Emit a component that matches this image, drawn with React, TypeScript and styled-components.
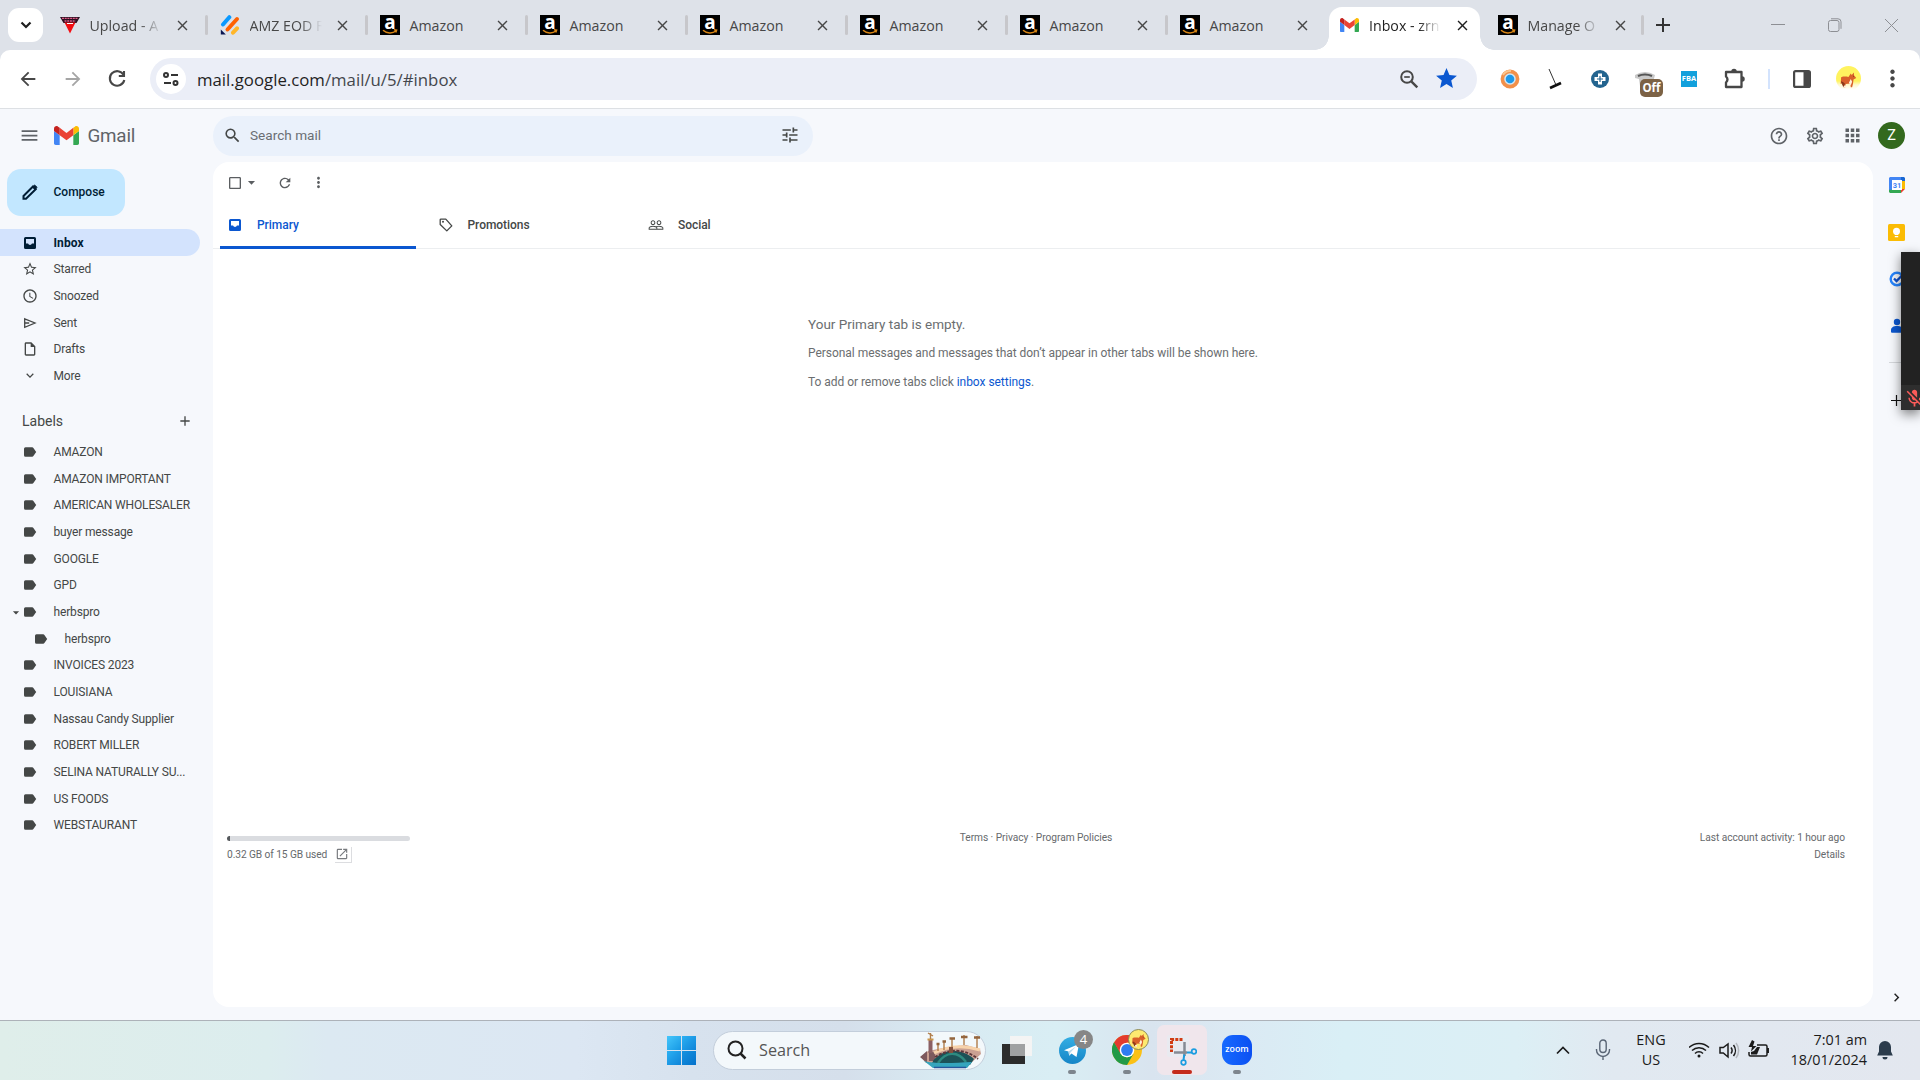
import React from "react";
import styled, { createGlobalStyle } from "styled-components";
import {
  MdMenu, MdSearch, MdTune, MdHelpOutline, MdOutlineSettings, MdApps, MdStarBorder,
  MdAccessTime, MdOutlineInsertDriveFile, MdExpandMore, MdAdd, MdPeopleOutline,
  MdCheckBoxOutlineBlank, MdArrowDropDown, MdRefresh, MdMoreVert, MdOpenInNew, MdClose,
  MdArrowBack, MdArrowForward, MdStar, MdMicOff, MdChevronRight,
} from "react-icons/md";

const ui = `"Open Sans", "Noto Sans", sans-serif`;
const mail = `Roboto, "Liberation Sans", sans-serif`;

const Global = createGlobalStyle`
  * { box-sizing: border-box; }
  body { margin: 0; overflow: hidden; background: #f6f8fc; }
  svg { display: block; flex: none; }
`;

const Screen = styled.div`
  width: 1920px;
  height: 1080px;
  display: flex;
  flex-direction: column;
  font-family: ${ui};
  white-space: nowrap;
`;

/* ---------- tab strip ---------- */

const TabStrip = styled.header`
  height: 50px;
  flex: none;
  display: flex;
  background: #dee2e9;
`;

const TabSearch = styled.button`
  width: 35px;
  height: 34px;
  margin: 8px 3px 0 8px;
  padding: 0;
  border: 0;
  border-radius: 11px;
  background: #fff;
  display: grid;
  place-items: center;
`;

const TabItem = styled.div<{ $active?: boolean; $divider?: boolean; $width: number }>`
  position: relative;
  width: ${(p) => p.$width}px;
  height: 50px;
  display: flex;
  align-items: center;
  padding-left: ${(p) => (p.$active ? 13.5 : 14)}px;
  color: ${(p) => (p.$active ? "#1f1f1f" : "#474747")};
  &::before {
    content: "";
    display: ${(p) => (p.$active ? "block" : "none")};
    position: absolute;
    left: 3px;
    top: 7px;
    width: 151px;
    height: 43px;
    border-radius: 13px 13px 0 0;
    background: #fff;
  }
  &::after {
    content: "";
    position: absolute;
    ${(p) =>
      p.$active
        ? `left: -11px; bottom: 0; width: 179px; height: 14px;
           background:
             radial-gradient(circle at 0 0, transparent 13.5px, #fff 14px) 0 0 / 14px 14px no-repeat,
             radial-gradient(circle at 100% 0, transparent 13.5px, #fff 14px) 100% 0 / 14px 14px no-repeat;`
        : `display: ${p.$divider ? "block" : "none"}; right: -2px; top: 15px; width: 3px; height: 20px;
           border-radius: 2px; background: #c7c7cb;`}
  }
  > * { position: relative; z-index: 1; }
`;

const Favicon = styled.span`
  width: 20px;
  height: 20px;
  flex: none;
  display: grid;
  place-items: center;
`;

const AmazonMark = styled.span`
  width: 20px;
  height: 20px;
  display: flex;
  flex-direction: column;
  align-items: center;
  background: #000;
  color: #fff;
  font: 700 19px/14px ${ui};
`;

const TabTitle = styled.span<{ $fade?: boolean }>`
  width: 75px;
  margin: 2px 0 0 9.5px;
  font-size: 14.2px;
  line-height: 20px;
  mask-image: ${(p) => (p.$fade ? "linear-gradient(90deg, #000 66%, transparent 96%)" : "none")};
`;

const TabClose = styled(MdClose)`
  margin-left: 9.5px;
  width: 17px;
  height: 17px;
`;

const NewTab = styled.div`
  width: 42px;
  display: grid;
  place-items: center;
  color: #333;
`;

const WindowControls = styled.div`
  margin-left: auto;
  display: flex;
  align-items: center;
  gap: 42px;
  padding-right: 21.5px;
  color: #8d8f94;
`;

/* ---------- browser toolbar ---------- */

const ToolbarFrame = styled.div`
  height: 59px;
  flex: none;
  background: #dee2e9;
`;

const BrowserBar = styled.div`
  height: 59px;
  display: flex;
  align-items: center;
  padding: 0 0 1px 17px;
  border-radius: 10px 10px 0 0;
  border-bottom: 1px solid #dde0e4;
  background: #fff;
  color: #474747;
`;

const NavButtons = styled.div`
  flex: none;
  display: flex;
  gap: 22.5px;
  width: 133px;
  > :nth-child(2) { color: #a5a5a5; }
`;

const Omnibox = styled.div`
  width: 1327px;
  flex: none;
  height: 42px;
  border-radius: 21px;
  display: flex;
  align-items: center;
  padding: 0 18px 0 6px;
  background: #ebeef7;
`;

const SiteInfo = styled.span`
  width: 30px;
  height: 30px;
  border-radius: 50%;
  display: grid;
  place-items: center;
  background: #fff;
`;

const Url = styled.span`
  margin: 3px auto 0 11px;
  font-size: 16.8px;
  line-height: 24px;
  color: #44474c;
  b { font-weight: 400; color: #1f1f1f; }
`;

const StarIcon = styled(MdStar)`
  margin-left: 15px;
  color: #0b57d0;
`;

const Extensions = styled.div`
  flex: 1;
  display: flex;
  align-items: center;
  padding-left: 10px;
`;

const ExtSlot = styled.span<{ $w: number }>`
  position: relative;
  width: ${(p) => p.$w}px;
  flex: none;
  display: grid;
  place-items: center;
`;

const OffBadge = styled.span`
  position: absolute;
  left: 18px;
  top: 9px;
  width: 23px;
  height: 18px;
  border-radius: 5px;
  background: #7c6245;
  color: #fff;
  font: 700 11.5px/18px ${ui};
  text-align: center;
`;

const FbaMark = styled.span`
  width: 16px;
  height: 16px;
  background: #12a0dc;
  color: #fff;
  font: 700 7.5px/14px ${ui};
  text-align: center;
`;

const BarDivider = styled.span`
  width: 2px;
  height: 20px;
  background: #d3e3fd;
`;

/* ---------- gmail ---------- */

const Gmail = styled.div`
  flex: 1;
  min-height: 0;
  display: grid;
  grid-template: 53px 1fr / 213px 1fr 47px;
  background: #f6f8fc;
  font-family: ${mail};
  color: #444746;
`;

const Brand = styled.div`
  display: flex;
  align-items: center;
  padding-left: 19px;
  color: #5f6368;
`;

const BrandLogo = styled.span`
  margin-left: 13.5px;
`;

const BrandName = styled.span`
  margin-left: 9px;
  font-size: 18.8px;
  letter-spacing: -0.2px;
`;

const HeaderRow = styled.div`
  grid-column: 2 / 4;
  display: flex;
  align-items: center;
`;

const SearchBox = styled.div`
  width: 600px;
  height: 40px;
  border-radius: 20px;
  display: flex;
  align-items: center;
  padding: 0 13px 1px 10px;
  background: #eaf1fb;
`;

const SearchText = styled.span`
  margin: 0 auto 0 8px;
  font-size: 13.6px;
  color: #6a6e73;
`;

const HeaderActions = styled.div`
  margin-left: auto;
  display: flex;
  align-items: center;
  gap: 16.5px;
  padding-right: 15px;
  color: #5f6368;
`;

const Account = styled.span`
  width: 27px;
  height: 27px;
  margin-left: -1px;
  border-radius: 50%;
  display: grid;
  place-items: center;
  background: #33691e;
  color: #fff;
  font-size: 14.5px;
`;

const Sidebar = styled.nav`
  padding-top: 7px;
`;

const Compose = styled.button`
  width: 118px;
  height: 47px;
  margin: 0 0 13.3px 7px;
  padding: 0 0 1px 13px;
  border: 0;
  border-radius: 14px;
  display: flex;
  align-items: center;
  gap: 13.5px;
  background: #c2e7ff;
  color: #001d35;
  font: 500 12px ${mail};
`;

const NavRow = styled.div<{ $selected?: boolean; $nested?: boolean }>`
  position: relative;
  width: 200px;
  height: 26.667px;
  display: flex;
  align-items: center;
  gap: 15.5px;
  padding-left: ${(p) => (p.$nested ? 33 : 22)}px;
  border-radius: 0 14px 14px 0;
  background: ${(p) => (p.$selected ? "#d3e3fd" : "transparent")};
  color: ${(p) => (p.$selected ? "#001d35" : "#444746")};
  font-size: 12px;
  line-height: 16px;
  font-weight: ${(p) => (p.$selected ? 700 : 400)};
  letter-spacing: ${(p) => (p.$selected ? 0.1 : -0.15)}px;
  > svg { width: 16px; }
`;

const Caret = styled(MdArrowDropDown)`
  position: absolute;
  left: 8px;
`;

const LabelsHeader = styled.div`
  height: 49.5px;
  display: flex;
  align-items: center;
  justify-content: space-between;
  padding: 14px 20px 0 22px;
  font-size: 14px;
`;

const Card = styled.main`
  height: 845px;
  border-radius: 16px;
  display: flex;
  flex-direction: column;
  background: #fff;
`;

const MailTools = styled.div`
  height: 41px;
  display: flex;
  align-items: center;
  padding-left: 14px;
  color: #5b5e61;
  > :nth-child(2) { margin-right: 17px; }
  > :nth-child(3) { margin-right: 17px; }
`;

const CategoryTabs = styled.div`
  height: 46px;
  width: 1647px;
  display: flex;
  padding-left: 7px;
  border-bottom: 1px solid #eceef0;
`;

const Category = styled.div<{ $active?: boolean; $width: number }>`
  width: ${(p) => p.$width}px;
  height: 46px;
  display: flex;
  align-items: center;
  gap: 14px;
  padding-left: 7px;
  margin-right: 14.5px;
  color: ${(p) => (p.$active ? "#0b57d0" : "#444746")};
  font-size: 12px;
  font-weight: 500;
  letter-spacing: -0.05px;
  border-bottom: 3px solid ${(p) => (p.$active ? "#0b57d0" : "transparent")};
  border-radius: 2px 2px 0 0;
`;

const Empty = styled.section`
  height: 587px;
  padding: 61px 0 0 595px;
  color: #6b6e70;
  font-size: 12px;
`;

const EmptyTitle = styled.p`
  margin: 0;
  font-size: 13.5px;
  line-height: 29px;
`;

const EmptyLine = styled.p`
  margin: 0;
  line-height: 29px;
  letter-spacing: -0.04px;
  a { color: #0b57d0; }
`;

const Footer = styled.footer`
  display: grid;
  grid-template-columns: 1fr 1fr 1fr;
  padding: 0 28px 0 14px;
  color: #66696c;
  font-size: 10.2px;
  line-height: 17px;
`;

const Meter = styled.div`
  width: 183px;
  height: 5px;
  border-radius: 3px;
  background: linear-gradient(90deg, #55585c 3px, #dadce0 3px);
`;

const Storage = styled.div`
  height: 27px;
  display: flex;
  align-items: center;
  gap: 8px;
  letter-spacing: -0.08px;
`;

const OpenButton = styled.span`
  padding: 0 1.5px 1px 0;
  border-right: 1px solid #dcdde0;
  border-bottom: 1px solid #dcdde0;
  color: #777a7e;
`;

const FootNote = styled.div<{ $align: string }>`
  margin-top: -7px;
  text-align: ${(p) => p.$align};
  letter-spacing: -0.05px;
`;

const SideApps = styled.aside`
  height: 858px;
  display: flex;
  flex-direction: column;
  align-items: center;
  padding-top: 15px;
`;

const AppSlot = styled.span<{ $h: number }>`
  height: ${(p) => p.$h}px;
  flex: none;
  display: flex;
  align-items: flex-start;
`;

const SideRule = styled.span`
  width: 16px;
  height: 1px;
  margin: 3px 0 29px;
  flex: none;
  background: #d5d8dc;
`;

const Collapse = styled.span`
  margin-top: auto;
  padding-bottom: 14px;
  color: #222;
`;

const MeetingPanel = styled.div`
  position: absolute;
  left: 1901px;
  top: 252px;
  width: 19px;
  height: 158px;
  background: #222;
  box-shadow: 0 4px 12px rgba(0, 0, 0, 0.5);
  display: flex;
  align-items: flex-end;
`;

const MeetingFoot = styled.div`
  width: 19px;
  height: 25px;
  padding: 3px 0 0 3px;
  overflow: hidden;
  background: #2e2e2e;
  color: #fa5b59;
`;

/* ---------- taskbar ---------- */

const Taskbar = styled.footer`
  height: 60px;
  flex: none;
  display: flex;
  align-items: center;
  padding-bottom: 1px;
  border-top: 1px solid #adb2b9;
  background: linear-gradient(90deg, #dfeeea 0, #dcedee 14%, #dce9f2 17%, #dce7f3 30%, #d7e2ee 36%, #d5dfeb 44%, #d8eaf2 49%, #d9eef4 55%, #d9e4ef 60%, #dbe9f3 64%, #d9eff6 70%, #dceff5 79%, #e1e9f1 84%, #e3e7ef 100%);
  color: #1b1b1b;
`;

const StartButton = styled.div`
  margin-left: 667px;
  width: 29px;
  height: 29px;
  display: grid;
  grid-template-columns: 14px 14px;
  grid-template-rows: 14px 14px;
  gap: 1px;
  i { background: linear-gradient(135deg, #45c6fb, #1698e4); }
  i:nth-child(n + 2) { background: linear-gradient(135deg, #2bb0f3, #0f84d8); }
  i:nth-child(4) { background: linear-gradient(135deg, #1592e0, #0572cb); }
`;

const TaskSearch = styled.div`
  width: 273px;
  height: 39px;
  margin-left: 17px;
  padding: 0 3px 0 13px;
  border-radius: 20px;
  border: 1px solid #c3cedb;
  display: flex;
  align-items: center;
  background: #f3f8fb;
  color: #555;
  font-size: 16.2px;
  > span { margin: 0 auto 0 12px; }
`;

const AppsRow = styled.div`
  display: flex;
  gap: 5px;
  margin-left: 6px;
`;

const TaskApp = styled.div<{ $active?: boolean; $running?: boolean }>`
  position: relative;
  width: 50px;
  height: 50px;
  flex: none;
  display: grid;
  place-items: center;
  border-radius: 7px;
  background: ${(p) => (p.$active ? "#f0e6ec" : "transparent")};
  &::after {
    content: "";
    display: ${(p) => (p.$running ? "block" : "none")};
    position: absolute;
    bottom: 1px;
    left: calc(50% - ${(p) => (p.$active ? 10 : 4)}px);
    width: ${(p) => (p.$active ? 20 : 8)}px;
    height: 4px;
    border-radius: 2px;
    background: ${(p) => (p.$active ? "#c42b1c" : "#7d858d")};
  }
`;

const CountBadge = styled.span`
  position: absolute;
  left: 27px;
  top: 5px;
  width: 19px;
  height: 19px;
  border-radius: 50%;
  background: #868686;
  color: #fff;
  font-size: 13px;
  line-height: 19px;
  text-align: center;
`;

const ProfileBadge = styled.span`
  position: absolute;
  left: 26px;
  top: 4px;
  width: 21px;
  height: 21px;
  border-radius: 50%;
  border: 1px solid #8d8a58;
  background: #fdea70;
`;

const ZoomApp = styled.span`
  width: 30px;
  height: 30px;
  border-radius: 11px;
  background: linear-gradient(90deg, #1769ff, #0b50f2);
  color: #fff;
  font: 600 8.8px/28px ${ui};
  text-align: center;
`;

const Tray = styled.div`
  margin-left: auto;
  display: flex;
  align-items: center;
  padding-right: 27px;
  font-size: 14.4px;
  line-height: 20px;
`;

const TrayMic = styled.span`
  margin-left: 25px;
`;

const Language = styled.div`
  width: 40px;
  margin: 0 18px 0 20px;
  text-align: center;
`;

const Clock = styled.div`
  width: 85px;
  margin: 0 10px 0 13px;
  text-align: right;
`;

/* ---------- drawings ---------- */

const GmailLogo = ({ w }: { w: number }) => (
  <svg width={w} height={w * 0.76} viewBox="52 42 88 66">
    <path fill="#4285f4" d="M58 108h14V74L52 59v43c0 3.32 2.69 6 6 6" />
    <path fill="#34a853" d="M120 108h14c3.32 0 6-2.69 6-6V59l-20 15" />
    <path fill="#fbbc04" d="M120 48v26l20-15v-8c0-7.42-8.47-11.65-14.4-7.2" />
    <path fill="#ea4335" d="M72 74V48l24 18 24-18v26L96 92" />
    <path fill="#c5221f" d="M52 51v8l20 15V48l-5.6-4.2c-5.94-4.45-14.4-.22-14.4 7.2" />
  </svg>
);

const AmazonIcon = () => (
  <AmazonMark>
    a
    <svg width="16" height="6" viewBox="0 0 16 6">
      <path d="M1 1.2c4 3.6 9.500 3.500 13 .8M12 .8l2.600.4-.8 2.400" fill="none" stroke="#d98616" strokeWidth="1.500" />
    </svg>
  </AmazonMark>
);

const UploadIcon = () => (
  <svg width="20" height="20" viewBox="0 0 20 20">
    <path d="M0 2h20l-3.500 6h-13z" fill="#2b1020" />
    <path d="M4.500 7.500h11L10 18.500z" fill="#f30d12" />
    <path d="M2 3.300h16M4.500 6h11" stroke="#e05a86" strokeWidth="1.300" strokeDasharray="2 .7" />
    <path d="M7 8.500h6" stroke="#fff" strokeWidth="1" />
  </svg>
);

const FormIcon = () => (
  <svg width="20" height="20" viewBox="0 0 20 20" strokeLinecap="round" strokeWidth="4">
    <path d="M3 9.500 9.300 2.200" stroke="#0a99ff" />
    <path d="M7.500 14.500 17 4" stroke="#ff6100" />
    <path d="m13 17.700 4-4.400" stroke="#ffb629" />
    <path d="M.8 14.500v5h5z" fill="#0a1551" />
  </svg>
);

const ReloadIcon = () => (
  <svg width="22" height="22" viewBox="0 0 22 22" fill="none" stroke="currentColor" strokeWidth="2.100">
    <path d="M17.500 6.800A7.300 7.300 0 1 0 18.300 12M18 3v5h-5.200" />
  </svg>
);

const SiteIcon = () => (
  <svg width="18" height="16" viewBox="0 0 18 16" fill="none" stroke="#333" strokeWidth="2">
    <circle cx="4" cy="4" r="2" /><path d="M9 4h7M2 12h7" /><circle cx="13.500" cy="12" r="2" />
  </svg>
);

const ZoomOutIcon = () => (
  <svg width="20" height="20" viewBox="0 0 20 20" fill="none" stroke="currentColor" strokeWidth="2">
    <circle cx="8" cy="8" r="5.800" /><path d="M5.200 8h5.600" strokeWidth="1.700" /><path d="m12.300 12.300 6 6" strokeWidth="2.400" />
  </svg>
);

const Corgi = ({ size }: { size: number }) => (
  <svg width={size} height={size} viewBox="0 0 24 24">
    <path d="M4.500 10c3-1 6-.5 8-.3L15 6l1 1.500L18.500 5v3l2.500 3-3 1.500-.5 4.500-1 4h-1.500l-.5-4-5 .5-.5 3.500H7l-1-4.500-2 1z" fill="#d9602a" />
    <path d="m15 12 1.500 3-1.500 4-2-3zM7 19h3v2H7z" fill="#fff2dc" />
    <path d="m5 15 3 2-1 3zM17.500 9h1" stroke="#7e3116" fill="#9f421d" />
  </svg>
);

const CorgiFace = styled.span`
  width: 25px;
  height: 25px;
  border-radius: 50%;
  display: grid;
  place-items: center;
  background: linear-gradient(#fff35f 60%, #fff9ce 75%, #fff 95%);
`;

const PencilIcon = () => (
  <svg width="20" height="20" viewBox="0 0 20 20" fill="none" stroke="currentColor" strokeWidth="2">
    <path d="M3.500 14 13 4.500 15.700 7.200 6 16.700H3.500z" />
    <path d="M12.500 5 15 7.500l1.600-1.600a.8.800 0 0 0 0-1.100l-1.400-1.400a.8.800 0 0 0-1.100 0z" fill="currentColor" strokeWidth="1" />
  </svg>
);

const InboxIcon = () => (
  <svg width="16" height="16" viewBox="0 0 16 16">
    <path
      fill="currentColor"
      fillRule="evenodd"
      d="M3.500 2h9A1.500 1.500 0 0 1 14 3.500v9a1.500 1.500 0 0 1-1.500 1.500h-9A1.500 1.500 0 0 1 2 12.500v-9A1.500 1.500 0 0 1 3.500 2zM4 4v4.600h2a2.200 2.200 0 0 0 4 0h2V4z"
    />
  </svg>
);

const LabelIcon = () => (
  <svg width="16" height="16" viewBox="0 0 16 16">
    <path d="M3.500 3.300h6.700c.5 0 .9.200 1.200.600L14.200 8l-2.800 4.100c-.3.400-.7.600-1.200.600H3.500A1.500 1.500 0 0 1 2 11.200V4.800a1.500 1.500 0 0 1 1.500-1.500z" fill="#444746" />
  </svg>
);

const SendIcon = () => (
  <svg width="16" height="16" viewBox="0 0 16 16" fill="none" stroke="currentColor" strokeWidth="1.300">
    <path d="M2.700 3.800 13 8 2.700 12.300V3.800zM2.700 8h4.500" />
  </svg>
);

const PromoIcon = () => (
  <svg width="16" height="16" viewBox="0 0 16 16">
    <path d="M2.200 7.500V2.900c0-.5.300-.8.800-.8h4.800l6 6.800-5 5z" fill="none" stroke="currentColor" strokeWidth="1.300" strokeLinejoin="round" />
    <circle cx="5" cy="4.800" r="1" fill="currentColor" />
  </svg>
);

const CalendarIcon = () => (
  <svg width="16" height="16" viewBox="0 0 16 16">
    <path d="M1 0h11v3H3v10H0V1z" fill="#4285f4" /><path d="M12 0h3l1 1v3h-4z" fill="#1967d2" />
    <path d="M12.800 4H16v8h-3.200z" fill="#fbbc04" /><path d="M0 12.800h12V16H1l-1-1z" fill="#34a853" />
    <path d="M12 12h4l-4 4z" fill="#ea4335" /><path d="M3 3h10v10H3z" fill="#fff" />
    <text x="8" y="10.800" textAnchor="middle" fontFamily="Roboto" fontSize="7.500" fontWeight="700" fill="#4285f4">31</text>
  </svg>
);

const KeepIcon = () => (
  <svg width="17" height="17" viewBox="0 0 17 17">
    <rect width="17" height="17" rx="1.500" fill="#fbbc04" />
    <circle cx="8.500" cy="7.200" r="3.500" fill="#fff" /><path d="M6.800 9h3.400v2H6.800zM6.800 12h3.400v1.200H6.800z" fill="#fff" />
  </svg>
);

const TasksIcon = () => (
  <svg width="16" height="16" viewBox="0 0 16 16" fill="none">
    <circle cx="8" cy="8" r="6.300" stroke="#2684fc" strokeWidth="2.400" />
    <path d="m5 7.500 2.500 2.500 6-6" stroke="#0f4fc9" strokeWidth="2.300" />
  </svg>
);

const ContactsIcon = () => (
  <svg width="12" height="16" viewBox="0 0 12 16" fill="#0b57d0">
    <circle cx="6" cy="4" r="3.200" /><path d="M0 13.500V12c0-2.500 2.500-4 6-4s6 1.500 6 4v1.500c0 .8-.5 1.300-1.300 1.300H1.300C.5 14.800 0 14.300 0 13.500z" />
  </svg>
);

const BridgeArt = () => (
  <svg width="62" height="37" viewBox="0 0 62 37">
    <path d="M1 25 8 19l20-4 18-2 14 4 1 5-10 9H6z" fill="#caa092" />
    <path d="M0 25 7 19v12zM9 20h6v9H9z" fill="#7d5a5e" />
    <path d="M12 31c6-13 28-17 42-4l-4 6H12z" fill="#1d5257" />
    <path d="M18 31C26 19 38 19 46 30" fill="none" stroke="#2e8a80" strokeWidth="2.500" />
    <path d="M14 21C28 13.500 44 13 60 18" fill="none" stroke="#f7d2ab" strokeWidth="3" />
    <path d="M15 25C30 16 46 17 58 27" fill="none" stroke="#60373b" strokeWidth="2" strokeDasharray="3 1.500" />
    <path d="M4 29c10 3 30 2 48 1l-5 6H13z" fill="#35a5bd" />
    <path d="M14 35.500h32" stroke="#27579b" strokeWidth="1.500" />
    <path d="M8.500 8h4v13h-4z" fill="#8b6064" />
    <path d="M7.500 7.500h6" stroke="#c9974d" strokeWidth="2" />
    <path d="M10.500 1v6M8 1l5 3M18 12v7M24 9v9M32 6v10M44 3v10M57 4v12" stroke="#b07d4a" strokeWidth="1.400" />
    <path d="M16.500 12h3M22.500 9.500h3.500M29.500 6.500h5.500M41 5h6.500M54 5.500h6" stroke="#94653f" strokeWidth="2.400" />
    <path d="M29 15h4v6h-4z" fill="#83513f" />
  </svg>
);

const ChromeIcon = () => (
  <svg width="30" height="30" viewBox="0 0 30 30">
    <circle cx="15" cy="15" r="15" fill="#fbc116" />
    <path d="M15 15 2 7.500A15 15 0 0 1 28 7.500H15z" fill="#e33b2e" />
    <path d="M2 7.500 8.500 18.800 15 22.500l6.500-3.700L15 30A15 15 0 0 1 2 7.500z" fill="#229a47" />
    <path d="M2 7.500h13V15l-6.500 3.800z" fill="#e33b2e" />
    <path d="M2 7.500 8.500 18.800 5 20 .5 12z" fill="#229a47" />
    <circle cx="15" cy="15" r="7.300" fill="#fff" /><circle cx="15" cy="15" r="5.900" fill="#2f7cf0" />
  </svg>
);

const TelegramIcon = () => (
  <svg width="27" height="27" viewBox="0 0 27 27">
    <defs><linearGradient id="tg" x2="0" y2="1"><stop stopColor="#35aee3" /><stop offset="1" stopColor="#1585c7" /></linearGradient></defs>
    <circle cx="13.500" cy="13.500" r="13.500" fill="url(#tg)" />
    <path d="M5 13.200 20 7l-2.500 13-5-3.500-2.300 2.200-.7-4.300z" fill="#fff" /><path d="m9.500 14.400 7.500-5-5.500 6-1.300 3.300z" fill="#b8d9ec" />
  </svg>
);

const SnipIcon = () => (
  <svg width="30" height="31" viewBox="0 0 30 31">
    <rect width="22" height="22" rx="2" fill="#e9eaf0" />
    <path d="M15.500 4.500H4.500V17" fill="none" stroke="#d13b12" strokeWidth="3" strokeDasharray="3 1.200" />
    <path d="M17.500 7v14M7 17.500h13" stroke="#858b94" strokeWidth="2.500" />
    <path d="M17.300 19.500 16.500 25M20 17.500h5" stroke="#1b9de0" strokeWidth="2" />
    <circle cx="27" cy="16.500" r="2.300" fill="none" stroke="#1b9de0" strokeWidth="1.700" />
    <circle cx="16.500" cy="27.500" r="2.300" fill="none" stroke="#1b9de0" strokeWidth="1.700" />
  </svg>
);

const TaskViewIcon = () => (
  <svg width="30" height="28" viewBox="0 0 30 28">
    <path d="M0 8h23v20H0z" fill="#2c2c2c" /><path d="M8 0h22v20H8z" fill="#f4f4f4" /><path d="M8 8h15v12H8z" fill="#a0a1a2" />
  </svg>
);

const TrayIcons = () => (
  <svg width="80" height="24" viewBox="0 0 80 24" fill="none" stroke="#1b1b1b" strokeWidth="1.500">
    <path d="M0 9.500a14.300 14.300 0 0 1 20 0M3 12.500a10 10 0 0 1 14 0M6 15.500a5.700 5.700 0 0 1 8 0" />
    <circle cx="10" cy="18" r="1.500" fill="#1b1b1b" stroke="none" />
    <path d="M31 9.500h3.300L39 6v13l-4.700-4H31zM42 9.500a5 5 0 0 1 0 6M44.500 7a9 9 0 0 1 0 11" />
    <path d="M47 5a12 12 0 0 1 0 15" stroke="#b4b8be" />
    <path d="M68 7h8.500a1.500 1.500 0 0 1 1.500 1.500v8a1.500 1.500 0 0 1-1.500 1.500h-15a1.500 1.500 0 0 1-1.500-1.500V14M79.200 10v5" />
    <path d="m63 2-3.500 7H63l-1 4.500L67.500 8H64l1.500-4.500zM62 16.500v-2.500l3-1 3-4h3l-3 7.500z" fill="#1b1b1b" stroke="none" />
  </svg>
);

const MicIcon = () => (
  <svg width="16" height="22" viewBox="0 0 16 22" fill="none" stroke="#596575" strokeWidth="1.400">
    <rect x="4.800" y="1" width="6.400" height="12.500" rx="3.200" /><path d="M1.500 10v1a6.500 6.500 0 0 0 13 0v-1M8 17.500V21" />
  </svg>
);

const BellIcon = () => (
  <svg width="16" height="20" viewBox="0 0 16 20" fill="#2c3c4c">
    <path d="M8 1a6 6 0 0 0-6 6v4.500L.2 15.500h15.600L14 11.500V7a6 6 0 0 0-6-6zM5.500 17h5a2.500 2.500 0 0 1-5 0z" />
  </svg>
);

/* ---------- data ---------- */

type TabData = { title: string; icon: React.ReactNode; width: number; active?: boolean; divider?: boolean };
const amazonTab: TabData = { title: "Amazon", icon: <AmazonIcon />, width: 160, divider: true };
const tabs: TabData[] = [
  { title: "Upload - A", icon: <UploadIcon />, width: 160, divider: true },
  { title: "AMZ EOD F", icon: <FormIcon />, width: 160, divider: true },
  amazonTab, amazonTab, amazonTab, amazonTab, amazonTab,
  { ...amazonTab, divider: false },
  { title: "Inbox - zrn", icon: <GmailLogo w={19} />, width: 158, active: true },
  { title: "Manage O", icon: <AmazonIcon />, width: 158, divider: true },
];

const folders = [
  { name: "Starred", icon: <MdStarBorder size={16} /> },
  { name: "Snoozed", icon: <MdAccessTime size={16} /> },
  { name: "Sent", icon: <SendIcon /> },
  { name: "Drafts", icon: <MdOutlineInsertDriveFile size={16} /> },
  { name: "More", icon: <MdExpandMore size={15} /> },
];

const labels: { name: string; open?: boolean; nested?: boolean }[] = [
  { name: "AMAZON" }, { name: "AMAZON IMPORTANT" }, { name: "AMERICAN WHOLESALER" },
  { name: "buyer message" }, { name: "GOOGLE" }, { name: "GPD" },
  { name: "herbspro", open: true }, { name: "herbspro", nested: true },
  { name: "INVOICES 2023" }, { name: "LOUISIANA" }, { name: "Nassau Candy Supplier" },
  { name: "ROBERT MILLER" }, { name: "SELINA NATURALLY SU..." }, { name: "US FOODS" }, { name: "WEBSTAURANT" },
];

/* ---------- page ---------- */

const Browser = () => (
  <>
    <TabStrip>
      <TabSearch>
        <svg width="12" height="8" viewBox="0 0 12 8"><path d="m1.500 1.500 4.500 4.500 4.500-4.500" fill="none" stroke="#1f1f1f" strokeWidth="2.200" /></svg>
      </TabSearch>
      {tabs.map((t, i) => (
        <TabItem key={i} $active={t.active} $divider={t.divider} $width={t.width}>
          <Favicon>{t.icon}</Favicon>
          <TabTitle $fade={t.title !== "Amazon"}>{t.title}</TabTitle>
          <TabClose />
        </TabItem>
      ))}
      <NewTab><svg width="14" height="14" viewBox="0 0 14 14"><path d="M7 0v14M0 7h14" stroke="currentColor" strokeWidth="2" /></svg></NewTab>
      <WindowControls>
        <svg width="14" height="14" viewBox="0 0 14 14"><path d="M0 6.500h14" stroke="currentColor" /></svg>
        <svg width="15" height="15" viewBox="0 0 15 15" fill="none" stroke="currentColor"><rect x="1.500" y="2.500" width="10.500" height="11" rx="2" /><path d="M4 .8h7a3 3 0 0 1 3 3v7" /></svg>
        <svg width="15" height="15" viewBox="0 0 15 15"><path d="m1 1 13 13M14 1 1 14" stroke="currentColor" /></svg>
      </WindowControls>
    </TabStrip>
    <ToolbarFrame>
      <BrowserBar>
        <NavButtons><MdArrowBack size={22} /><MdArrowForward size={22} /><ReloadIcon /></NavButtons>
        <Omnibox>
          <SiteInfo><SiteIcon /></SiteInfo>
          <Url><b>mail.google.com</b>/mail/u/5/#inbox</Url>
          <ZoomOutIcon />
          <StarIcon size={25} />
        </Omnibox>
        <Extensions>
          <ExtSlot $w={45}>
            <svg width="20" height="20" viewBox="0 0 20 20"><circle cx="10" cy="10" r="7.600" fill="#cfe6f5" stroke="#f2904a" strokeWidth="3.600" /><path d="M3 6a8 8 0 0 1 8-4" stroke="#fbc58d" strokeWidth="2" fill="none" /><circle cx="10" cy="10" r="4.300" fill="#1c97ea" /></svg>
          </ExtSlot>
          <ExtSlot $w={45}>
            <svg width="14" height="22" viewBox="0 0 14 22"><path d="m1 1 7 16" stroke="#333" /><path d="m2 20 11-5" stroke="#111" strokeWidth="2.800" /></svg>
          </ExtSlot>
          <ExtSlot $w={45}>
            <svg width="18" height="18" viewBox="0 0 18 18"><circle cx="9" cy="9" r="9" fill="#23648f" /><path d="M7 3.500h4V7h3.500v4H11v3.500H7V11H3.500V7H7z" fill="#fff" /><path d="M9 6v6M6 9h6" stroke="#23648f" strokeWidth="1.200" /></svg>
          </ExtSlot>
          <ExtSlot $w={46}>
            <svg width="20" height="18" viewBox="0 0 20 18"><path d="M0 5q10-6 20 0l-3 11H5L4 9 0 8z" fill="#c9c9c9" /><path d="M3 6q7-3 14 0" fill="none" stroke="#555" strokeWidth="2" /></svg>
            <OffBadge>Off</OffBadge>
          </ExtSlot>
          <ExtSlot $w={42}><FbaMark>FBA</FbaMark></ExtSlot>
          <ExtSlot $w={50}>
            <svg width="22" height="22" viewBox="0 0 22 22" fill="none" stroke="currentColor" strokeWidth="2.300"><path d="M2 4h15.500v15H2v-4.500q3-3 0-6z" strokeLinejoin="round" /><path d="M8 3.500a2 2 0 0 1 4 0zM18 9a2 2 0 0 1 0 4z" fill="currentColor" strokeWidth="1.500" /></svg>
          </ExtSlot>
          <ExtSlot $w={17}><BarDivider /></ExtSlot>
          <ExtSlot $w={50}>
            <svg width="18" height="18" viewBox="0 0 18 18"><rect x="1.100" y="1.100" width="15.800" height="15.800" rx="1.500" fill="none" stroke="currentColor" strokeWidth="2.200" /><path d="M10.500 1H17v16h-6.500z" fill="currentColor" /></svg>
          </ExtSlot>
          <ExtSlot $w={42}><CorgiFace><Corgi size={22} /></CorgiFace></ExtSlot>
          <ExtSlot $w={47}><MdMoreVert size={27} /></ExtSlot>
        </Extensions>
      </BrowserBar>
    </ToolbarFrame>
  </>
);

const GmailApp = () => (
  <Gmail>
    <Brand>
      <MdMenu size={21} />
      <BrandLogo><GmailLogo w={25} /></BrandLogo>
      <BrandName>Gmail</BrandName>
    </Brand>
    <HeaderRow>
      <SearchBox><MdSearch size={19} /><SearchText>Search mail</SearchText><MdTune size={20} /></SearchBox>
      <HeaderActions>
        <MdHelpOutline size={20} /><MdOutlineSettings size={20} /><MdApps size={21} /><Account>Z</Account>
      </HeaderActions>
    </HeaderRow>

    <Sidebar>
      <Compose><PencilIcon />Compose</Compose>
      <NavRow $selected><InboxIcon />Inbox</NavRow>
      {folders.map((f) => <NavRow key={f.name}>{f.icon}{f.name}</NavRow>)}
      <LabelsHeader>Labels<MdAdd size={16} /></LabelsHeader>
      {labels.map((l, i) => (
        <NavRow key={i} $nested={l.nested}>{l.open && <Caret size={15} />}<LabelIcon />{l.name}</NavRow>
      ))}
    </Sidebar>

    <Card>
      <MailTools>
        <MdCheckBoxOutlineBlank size={16} /><MdArrowDropDown size={17} /><MdRefresh size={16} /><MdMoreVert size={17} />
      </MailTools>
      <CategoryTabs>
        <Category $active $width={196}><InboxIcon />Primary</Category>
        <Category $width={196}><PromoIcon />Promotions</Category>
        <Category $width={196}><MdPeopleOutline size={16} />Social</Category>
      </CategoryTabs>
      <Empty>
        <EmptyTitle>Your Primary tab is empty.</EmptyTitle>
        <EmptyLine>Personal messages and messages that don’t appear in other tabs will be shown here.</EmptyLine>
        <EmptyLine>To add or remove tabs click <a>inbox settings</a>.</EmptyLine>
      </Empty>
      <Footer>
        <div><Meter /><Storage>0.32 GB of 15 GB used<OpenButton><MdOpenInNew size={14} /></OpenButton></Storage></div>
        <FootNote $align="center">Terms · Privacy · Program Policies</FootNote>
        <FootNote $align="right">Last account activity: 1 hour ago<br />Details</FootNote>
      </Footer>
    </Card>

    <SideApps>
      <AppSlot $h={47}><CalendarIcon /></AppSlot>
      <AppSlot $h={47}><KeepIcon /></AppSlot>
      <AppSlot $h={47}><TasksIcon /></AppSlot>
      <AppSlot $h={41}><ContactsIcon /></AppSlot>
      <SideRule />
      <AppSlot $h={20}><svg width="11" height="17" viewBox="0 0 11 17"><path d="M5.500 3v11M0 8.500h11" stroke="#111" strokeWidth="1.200" /></svg></AppSlot>
      <Collapse><MdChevronRight size={17} /></Collapse>
    </SideApps>
  </Gmail>
);

const Desktop = () => (
  <Taskbar>
    <StartButton><i /><i /><i /><i /></StartButton>
    <TaskSearch>
      <svg width="20" height="20" viewBox="0 0 20 20" fill="none" stroke="#222" strokeWidth="2"><circle cx="8.500" cy="8.500" r="7" /><path d="m13.500 13.500 5 5" strokeWidth="2.500" /></svg>
      <span>Search</span>
      <BridgeArt />
    </TaskSearch>
    <AppsRow>
      <TaskApp><TaskViewIcon /></TaskApp>
      <TaskApp $running><TelegramIcon /><CountBadge>4</CountBadge></TaskApp>
      <TaskApp $running><ChromeIcon /><ProfileBadge><Corgi size={19} /></ProfileBadge></TaskApp>
      <TaskApp $running $active><SnipIcon /></TaskApp>
      <TaskApp $running><ZoomApp>zoom</ZoomApp></TaskApp>
    </AppsRow>
    <Tray>
      <svg width="14" height="9" viewBox="0 0 14 9"><path d="m1 7.500 6-6 6 6" fill="none" stroke="#1b1b1b" strokeWidth="1.700" /></svg>
      <TrayMic><MicIcon /></TrayMic>
      <Language>ENG<br />US</Language>
      <TrayIcons />
      <Clock>7:01 am<br />18/01/2024</Clock>
      <BellIcon />
    </Tray>
  </Taskbar>
);

export default function App() {
  return (
    <Screen>
      <Global />
      <Browser />
      <GmailApp />
      <Desktop />
      <MeetingPanel><MeetingFoot><MdMicOff size={21} /></MeetingFoot></MeetingPanel>
    </Screen>
  );
}
